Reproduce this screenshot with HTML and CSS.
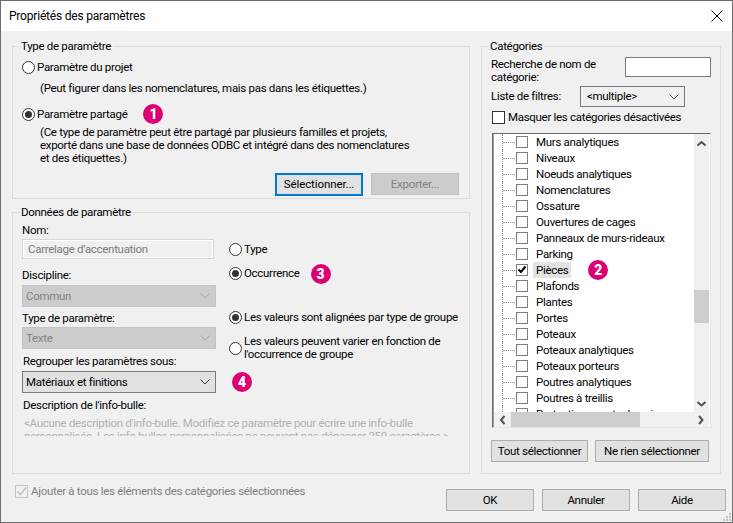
FILE: index.html
```html
<!DOCTYPE html>
<html lang="fr">
<head>
<meta charset="utf-8">
<title>Propriétés des paramètres</title>
<link rel="stylesheet" href="styles.css">
</head>
<body>
<div class="dialog">
  <header class="titlebar">
    <span class="title">Propriétés des paramètres</span>
    <svg class="close" width="12" height="12" viewBox="0 0 12 12"><path d="M.5.500l11 11M11.500.500l-11 11" stroke="#000" fill="none"/></svg>
  </header>
  <div class="content">
    <div class="left">
      <fieldset class="group g-type">
        <legend>Type de paramètre</legend>
        <div class="radio-row r1"><span class="radio"></span><span>Paramètre du projet</span></div>
        <p class="note n1">(Peut figurer dans les nomenclatures, mais pas dans les étiquettes.)</p>
        <div class="radio-row r2"><span class="radio on"></span><span>Paramètre partagé</span><span class="badge b1">1</span></div>
        <p class="note n2">(Ce type de paramètre peut être partagé par plusieurs familles et projets,<br>exporté dans une base de données ODBC et intégré dans des nomenclatures<br>et des étiquettes.)</p>
        <div class="btn-row">
          <button class="btn focus">Sélectionner...</button>
          <button class="btn off">Exporter...</button>
        </div>
      </fieldset>
      <fieldset class="group g-data">
        <legend>Données de paramètre</legend>
        <div class="data-grid">
          <div class="col-l">
            <label class="lab l-nom">Nom:</label>
            <div class="input-off">Carrelage d’accentuation</div>
            <label class="lab l-disc">Discipline:</label>
            <div class="select off s-disc"><span>Commun</span><svg class="chev" width="10" height="6" viewBox="0 0 10 6"><path d="M.5.500l4.500 4.500 4.500-4.500" stroke="#a8a8a8" fill="none"/></svg></div>
            <label class="lab l-type">Type de paramètre:</label>
            <div class="select off s-type"><span>Texte</span><svg class="chev" width="10" height="6" viewBox="0 0 10 6"><path d="M.5.500l4.500 4.500 4.500-4.500" stroke="#a8a8a8" fill="none"/></svg></div>
            <label class="lab l-reg">Regrouper les paramètres sous:</label>
            <div class="select s-reg"><span>Matériaux et finitions</span><svg class="chev" width="10" height="6" viewBox="0 0 10 6"><path d="M.5.500l4.500 4.500 4.500-4.500" stroke="#333" fill="none"/></svg></div>
          </div>
          <div class="col-r">
            <div class="radio-row rr1"><span class="radio"></span><span>Type</span></div>
            <div class="radio-row rr2"><span class="radio on"></span><span>Occurrence</span><span class="badge b3">3</span></div>
            <div class="radio-row rr3"><span class="radio on"></span><span>Les valeurs sont alignées par type de groupe</span></div>
            <div class="radio-row rr4"><span class="radio"></span><span>Les valeurs peuvent varier en fonction de<br>l'occurrence de groupe</span></div>
            <span class="badge b4">4</span>
          </div>
        </div>
        <label class="lab l-desc">Description de l'info-bulle:</label>
        <div class="tip"><p>&lt;Aucune description d'info-bulle. Modifiez ce paramètre pour écrire une info-bulle<br>personnalisée. Les info-bulles personnalisées ne peuvent pas dépasser 250 caractères.&gt;</p></div>
      </fieldset>
    </div>
    <fieldset class="group g-cat">
      <legend>Catégories</legend>
      <div class="search-row">
        <label class="search-lab">Recherche de nom de catégorie:</label>
        <div class="search-input"></div>
      </div>
      <div class="filter-row">
        <label>Liste de filtres:</label>
        <div class="select filter"><span>&lt;multiple&gt;</span><svg class="chev" width="10" height="6" viewBox="0 0 10 6"><path d="M.5.500l4.500 4.500 4.500-4.500" stroke="#555" fill="none"/></svg></div>
      </div>
      <div class="hide-row"><span class="check big"></span><span>Masquer les catégories désactivées</span></div>
      <div class="tree">
        <div class="tree-main">
          <div class="tree-view">
            <div class="row"><span class="dots"></span><span class="check"></span><span class="name">Murs analytiques</span></div>
            <div class="row"><span class="dots"></span><span class="check"></span><span class="name">Niveaux</span></div>
            <div class="row"><span class="dots"></span><span class="check"></span><span class="name">Noeuds analytiques</span></div>
            <div class="row"><span class="dots"></span><span class="check"></span><span class="name">Nomenclatures</span></div>
            <div class="row"><span class="dots"></span><span class="check"></span><span class="name">Ossature</span></div>
            <div class="row"><span class="dots"></span><span class="check"></span><span class="name">Ouvertures de cages</span></div>
            <div class="row"><span class="dots"></span><span class="check"></span><span class="name">Panneaux de murs-rideaux</span></div>
            <div class="row"><span class="dots"></span><span class="check"></span><span class="name">Parking</span></div>
            <div class="row"><span class="dots"></span><span class="check"><svg width="10" height="10" viewBox="0 0 10 10"><path d="M1.500 4.500l2.500 2.500L8.500 1.500" stroke="#000" stroke-width="2" fill="none"/></svg></span><span class="name sel">Pièces</span><span class="badge b2">2</span></div>
            <div class="row"><span class="dots"></span><span class="check"></span><span class="name">Plafonds</span></div>
            <div class="row"><span class="dots"></span><span class="check"></span><span class="name">Plantes</span></div>
            <div class="row"><span class="dots"></span><span class="check"></span><span class="name">Portes</span></div>
            <div class="row"><span class="dots"></span><span class="check"></span><span class="name">Poteaux</span></div>
            <div class="row"><span class="dots"></span><span class="check"></span><span class="name">Poteaux analytiques</span></div>
            <div class="row"><span class="dots"></span><span class="check"></span><span class="name">Poteaux porteurs</span></div>
            <div class="row"><span class="dots"></span><span class="check"></span><span class="name">Poutres analytiques</span></div>
            <div class="row"><span class="dots"></span><span class="check"></span><span class="name">Poutres à treillis</span></div>
            <div class="row"><span class="dots"></span><span class="check"></span><span class="name">Protections contre la neige</span></div>
          </div>
          <div class="vscroll">
            <svg width="15" height="16" viewBox="0 0 15 16"><path d="M3.500 11.500l4-3.500 4 3.500" stroke="#505050" stroke-width="2" fill="none"/></svg>
            <div class="vtrack"><div class="vthumb"></div></div>
            <svg width="15" height="16" viewBox="0 0 15 16"><path d="M3.500 6l4 3.500 4-3.500" stroke="#505050" stroke-width="2" fill="none"/></svg>
          </div>
        </div>
        <div class="hscroll">
          <svg width="17" height="16" viewBox="0 0 17 16"><path d="M10.500 4l-3.500 4 3.500 4" stroke="#505050" stroke-width="2" fill="none"/></svg>
          <div class="htrack"><div class="hthumb"></div></div>
          <svg width="17" height="16" viewBox="0 0 17 16"><path d="M7 4l3.500 4-3.500 4" stroke="#505050" stroke-width="2" fill="none"/></svg>
        </div>
      </div>
      <div class="cat-btns">
        <button class="btn all">Tout sélectionner</button>
        <button class="btn none">Ne rien sélectionner</button>
      </div>
    </fieldset>
  </div>
  <footer class="footer">
    <div class="add-row"><span class="check dis"><svg width="11" height="11" viewBox="0 0 11 11"><path d="M1.500 5.500l3 3L10 1.500" stroke="#bdbdbd" stroke-width="1.400" fill="none"/></svg></span><span>Ajouter à tous les éléments des catégories sélectionnées</span></div>
    <div class="foot-btns">
      <button class="btn fb">OK</button>
      <button class="btn fb">Annuler</button>
      <button class="btn fb">Aide</button>
    </div>
    <svg class="grip" width="10" height="10" viewBox="0 0 10 10"><path d="M7 1h2v2H7zM4 4h2v2H4zM7 4h2v2H7zM1 7h2v2H1zM4 7h2v2H4zM7 7h2v2H7z" fill="#c4c4c4"/></svg>
  </footer>
</div>
</body>
</html>
```
FILE: styles.css
```css
* { box-sizing: border-box; }
html, body { margin: 0; padding: 0; }
body {
  width: 733px; height: 523px; overflow: hidden;
  font-family: Roboto, "Liberation Sans", sans-serif; font-size: 11.5px; letter-spacing: -0.3px; color: #000; line-height: 13px;
}
.dialog {
  width: 733px; height: 523px; background: #f0f0f0;
  border: 1px solid #6d6d6d;
  display: flex; flex-direction: column; position: relative;
}
.titlebar {
  height: 30px; background: #fff; flex: none;
  display: flex; align-items: center; justify-content: space-between;
  padding: 0 9px 0 8px;
}
.title { font-size: 12px; letter-spacing: -0.2px; }
.content { display: flex; padding: 8px 11px 0 11px; gap: 11px; height: 443px; flex: none; }
.left { width: 458px; display: flex; flex-direction: column; gap: 6px; flex: none; }
fieldset.group { margin: 0; border: 1px solid #dcdcdc; min-width: 0; }
legend { padding: 0 2px; margin-left: -3px; line-height: 14px; }
.g-type { height: 160px; padding: 0 10px 0 9px; }
.g-data { height: 269px; padding: 0 9px; }
.g-cat { width: 240px; flex: none; padding: 0 9px; height: 435px; }
.radio-row { display: flex; align-items: center; }
.radio {
  width: 13px; height: 13px; border-radius: 50%; border: 1px solid #333; background: #fff;
  flex: none; margin-right: 2px; position: relative;
}
.radio.on::after {
  content: ""; position: absolute; left: 2px; top: 2px; width: 7px; height: 7px;
  border-radius: 50%; background: #333;
}
.note { margin-bottom: 0; margin-right: 0; margin-left: 18px; }
.r1 { margin-top: 4px; height: 20px; }
.n1 { margin-top: 5px; }
.r2 { margin-top: 9px; height: 20px; }
.n2 { margin-top: 2px; }
.badge {
  width: 20px; height: 20px; border-radius: 50%; background: #dc0073; color: #fff;
  font-weight: 900; font-size: 14px; line-height: 20px; text-align: center; flex: none; letter-spacing: 0;
}
.b1 { margin-left: 16px; }
.b3 { margin-left: 11px; }
.btn {
  font: inherit; letter-spacing: inherit; color: #000; background: #e1e1e1; border: 1px solid #adadad;
  padding: 0; margin: 0; height: 22px;
}
.btn.focus { border: 1px solid #0078d7; box-shadow: inset 0 0 0 1px #0078d7; width: 88px; height: 23px; letter-spacing: -0.1px; }
.btn.off { background: #ccc; border-color: #bfbfbf; color: #838383; width: 88px; height: 22px; }
.btn-row { display: flex; justify-content: flex-end; gap: 8px; margin-top: 8px; }
.data-grid { display: flex; height: 173px; }
.col-l { width: 194px; flex: none; display: flex; flex-direction: column; }
.col-r { margin-left: 13px; flex: 1; display: flex; flex-direction: column; }
.lab { display: block; }
.l-nom { margin-top: 5px; }
.input-off {
  height: 20px; width: 192px; margin-top: 2px; border: 1px solid #d6d6d6; background: #f0f0f0;
  box-shadow: inset 0 0 0 1px #fff; color: #7b7b7b; padding: 3px 5px;
}
.l-disc { margin-top: 10px; }
.select {
  height: 22px; border: 1px solid #7a7a7a; background: #e1e1e1; display: flex; align-items: center;
  justify-content: space-between; padding: 0 5px 0 3px; flex: none;
}
.select.off { background: #ccc; border-color: #c4c4c4; color: #838383; }
.s-disc, .s-reg { margin-top: 3px; }
.s-type { margin-top: 2px; }
.l-type { margin-top: 5px; }
.l-reg { margin: 6px 0 0 1px; }
.rr1 { margin-top: 21px; height: 20px; }
.rr2 { margin-top: 4px; height: 20px; }
.rr3 { margin-top: 24px; height: 20px; }
.rr4 { margin-top: 8px; height: 26px; }
.b4 { margin: 11px 0 0 3px; }
.l-desc { margin: 7px 0 0 1px; }
.tip { margin-top: 5px; height: 19px; overflow: hidden; color: #b0b0b0; padding-left: 2px; white-space: nowrap; }
.tip p { margin: 0; }
.search-row { display: flex; justify-content: space-between; height: 31px; }
.search-lab { width: 118px; padding-top: 5px; }
.search-input { width: 86px; height: 20px; background: #fff; border: 1px solid #7a7a7a; margin-top: 4px; }
.filter-row { display: flex; align-items: center; height: 21px; margin-top: 2px; }
.filter-row label { width: 89px; flex: none; }
.select.filter { width: 105px; height: 21px; background: #f0f0f0; padding: 0 5px 0 6px; }
.hide-row { display: flex; align-items: center; height: 14px; margin-top: 3px; }
.check {
  width: 13px; height: 13px; border: 1px solid #7f7f7f; background: #fff; flex: none; display: block;
}
.check svg { display: block; }
.check.big { margin: 0 3px 0 1px; border-color: #333; }
.tree {
  margin: 9px 0 0 1px; height: 295px; width: 219px; display: flex; flex-direction: column;
  border: 1px solid #e8e8e8; border-top-color: #696969; border-left-color: #696969; background: #fff;
  box-shadow: inset 1px 0 0 #a0a0a0;
  padding: 0 1px 0 1px;
}
.tree-main { flex: none; height: 278px; display: flex; }
.tree-view { flex: 1; height: 278px; overflow: hidden; }
.row { height: 16px; display: flex; align-items: center; white-space: nowrap; padding-left: 8px; }
.dots {
  width: 14px; height: 16px; flex: none; position: relative;
  border-left: 1px dotted #8c8c8c;
}
.dots::after { content: ""; position: absolute; left: 0; top: 8px; width: 12px; border-top: 1px dotted #8c8c8c; }
.row .check { width: 12px; height: 12px; }
.name { margin-left: 5px; padding: 0 3px; height: 16px; line-height: 17px; }
.name.sel { background: #e3e3e3; }
.b2 { margin-left: 17px; }
.vscroll { width: 15px; background: #f0f0f0; display: flex; flex-direction: column; flex: none; }
.vscroll svg, .hscroll svg { flex: none; display: block; }
.vtrack { flex: 1; }
.vthumb { height: 33px; margin-top: 140px; background: #cdcdcd; }
.hscroll { height: 15px; background: #f0f0f0; display: flex; flex: none; }
.htrack { flex: 1; }
.hthumb { width: 129px; height: 15px; background: #cdcdcd; }
.cat-btns { display: flex; justify-content: space-between; margin-top: 12px; width: 218px; }
.btn.all { width: 97px; }
.btn.none { width: 114px; }
.footer { flex: 1; display: flex; justify-content: space-between; padding: 15px 6px 0 14px; position: relative; }
.add-row { display: flex; align-items: center; height: 13px; margin-top: -4px; color: #7f7f7f; }
.check.dis { margin-right: 3px; border-color: #c4c4c4; background: #f0f0f0; }
.foot-btns { display: flex; gap: 8px; }
.fb { width: 88px; }
.grip { position: absolute; right: 0; bottom: 0; }
```
